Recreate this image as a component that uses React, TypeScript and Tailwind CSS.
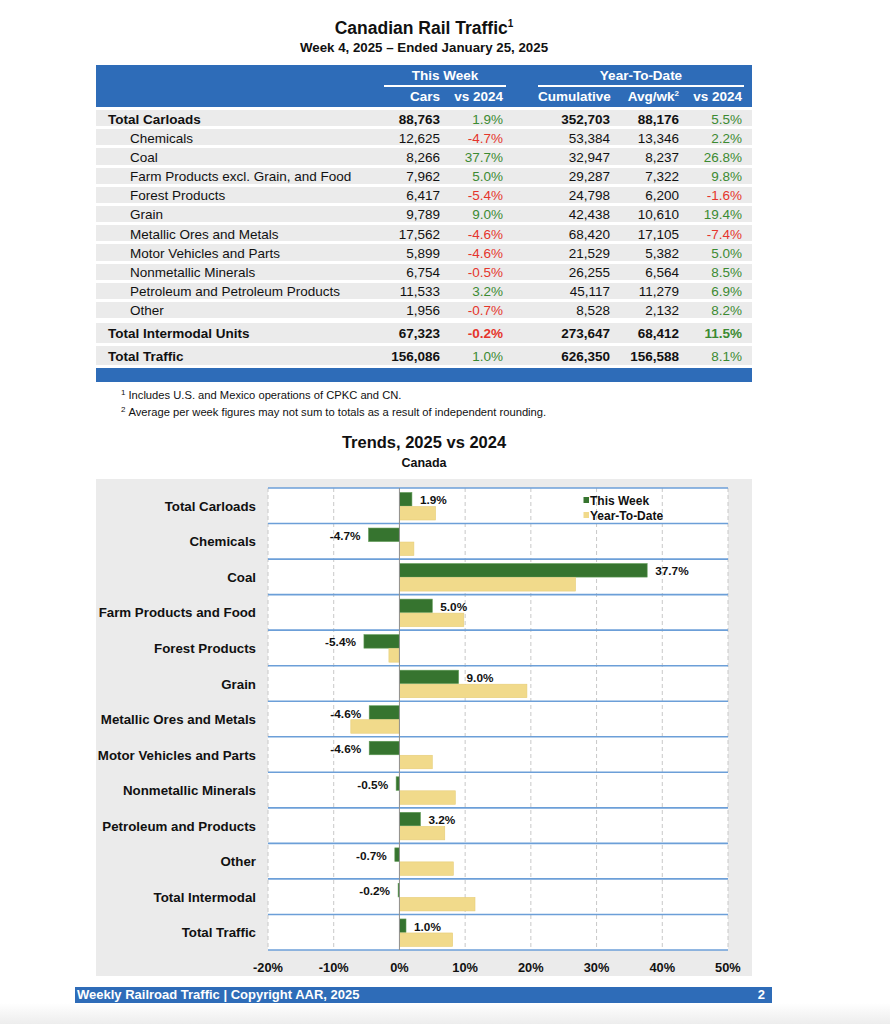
import React from 'react';

type Row = {
  label: string;
  total?: boolean;
  cars: string;
  vs: string;
  cum: string;
  avg: string;
  ytd: string;
  boldPct?: boolean;
};

const carloads: Row[] = [
  { label: 'Total Carloads', total: true, cars: '88,763', vs: '1.9%', cum: '352,703', avg: '88,176', ytd: '5.5%' },
  { label: 'Chemicals', cars: '12,625', vs: '-4.7%', cum: '53,384', avg: '13,346', ytd: '2.2%' },
  { label: 'Coal', cars: '8,266', vs: '37.7%', cum: '32,947', avg: '8,237', ytd: '26.8%' },
  { label: 'Farm Products excl. Grain, and Food', cars: '7,962', vs: '5.0%', cum: '29,287', avg: '7,322', ytd: '9.8%' },
  { label: 'Forest Products', cars: '6,417', vs: '-5.4%', cum: '24,798', avg: '6,200', ytd: '-1.6%' },
  { label: 'Grain', cars: '9,789', vs: '9.0%', cum: '42,438', avg: '10,610', ytd: '19.4%' },
  { label: 'Metallic Ores and Metals', cars: '17,562', vs: '-4.6%', cum: '68,420', avg: '17,105', ytd: '-7.4%' },
  { label: 'Motor Vehicles and Parts', cars: '5,899', vs: '-4.6%', cum: '21,529', avg: '5,382', ytd: '5.0%' },
  { label: 'Nonmetallic Minerals', cars: '6,754', vs: '-0.5%', cum: '26,255', avg: '6,564', ytd: '8.5%' },
  { label: 'Petroleum and Petroleum Products', cars: '11,533', vs: '3.2%', cum: '45,117', avg: '11,279', ytd: '6.9%' },
  { label: 'Other', cars: '1,956', vs: '-0.7%', cum: '8,528', avg: '2,132', ytd: '8.2%' },
];

const totals: Row[] = [
  { label: 'Total Intermodal Units', total: true, boldPct: true, cars: '67,323', vs: '-0.2%', cum: '273,647', avg: '68,412', ytd: '11.5%' },
  { label: 'Total Traffic', total: true, cars: '156,086', vs: '1.0%', cum: '626,350', avg: '156,588', ytd: '8.1%' },
];

const chart = [
  { name: 'Total Carloads', week: 1.9, ytd: 5.5 },
  { name: 'Chemicals', week: -4.7, ytd: 2.2 },
  { name: 'Coal', week: 37.7, ytd: 26.8 },
  { name: 'Farm Products and Food', week: 5.0, ytd: 9.8 },
  { name: 'Forest Products', week: -5.4, ytd: -1.6 },
  { name: 'Grain', week: 9.0, ytd: 19.4 },
  { name: 'Metallic Ores and Metals', week: -4.6, ytd: -7.4 },
  { name: 'Motor Vehicles and Parts', week: -4.6, ytd: 5.0 },
  { name: 'Nonmetallic Minerals', week: -0.5, ytd: 8.5 },
  { name: 'Petroleum and Products', week: 3.2, ytd: 6.9 },
  { name: 'Other', week: -0.7, ytd: 8.2 },
  { name: 'Total Intermodal', week: -0.2, ytd: 11.5 },
  { name: 'Total Traffic', week: 1.0, ytd: 8.1 },
];

const ticks = ['-20%', '-10%', '0%', '10%', '20%', '30%', '40%', '50%'];

function Pct({ v, bold }: { v: string; bold?: boolean }) {
  const neg = v.startsWith('-');
  return (
    <div className={`text-right ${neg ? 'text-[#e5352c]' : 'text-[#3b8a32]'} ${bold ? 'font-bold' : 'font-normal'}`}>
      {v}
    </div>
  );
}

function TableRow({ r, tall }: { r: Row; tall?: boolean }) {
  return (
    <div
      className={`grid grid-cols-[288px_56px_63px_35px_72px_69px_63px_10px] items-start bg-[#ebebeb] mt-[3px] ${
        tall ? 'h-[19.5px] pt-[3px] leading-[16px]' : 'h-[16.2px] pt-[2.5px] leading-[13.7px]'
      }`}
    >
      <div className={r.total ? 'pl-[12px] font-bold' : 'pl-[34px]'}>{r.label}</div>
      <div className={`text-right ${r.total ? 'font-bold' : ''}`}>{r.cars}</div>
      <Pct v={r.vs} bold={r.boldPct} />
      <div />
      <div className={`text-right ${r.total ? 'font-bold' : ''}`}>{r.cum}</div>
      <div className={`text-right ${r.total ? 'font-bold' : ''}`}>{r.avg}</div>
      <Pct v={r.ytd} bold={r.boldPct} />
      <div />
    </div>
  );
}

function TrendChart() {
  const W = 460;
  const H = 462;
  const rh = H / 13;
  const sc = W / 70;
  const x0 = 20 * sc;
  return (
    <svg width={W} height={H} className="block overflow-visible">
      {/* dashed gridlines */}
      {ticks.map((_, k) =>
        k === 2 ? null : (
          <line key={k} x1={(k * W) / 7} x2={(k * W) / 7} y1={0} y2={H} stroke="#c8c8c8" strokeWidth={1} strokeDasharray="4 3" />
        )
      )}
      {chart.map((c, i) => {
        const top = i * rh;
        const wx = c.week >= 0 ? x0 : x0 + c.week * sc;
        const yx = c.ytd >= 0 ? x0 : x0 + c.ytd * sc;
        const labelX = c.week >= 0 ? x0 + c.week * sc + 8 : x0 + c.week * sc - 8;
        return (
          <g key={c.name}>
            <rect x={wx} y={top + 4.5} width={Math.abs(c.week) * sc} height={13.5} fill="#36742f" stroke="#5f9a55" strokeWidth={0.6} />
            <rect x={yx} y={top + 18.5} width={Math.abs(c.ytd) * sc} height={13.5} fill="#f1da8b" stroke="#e6cd78" strokeWidth={0.6} />
            <text
              x={labelX}
              y={top + 12.3}
              textAnchor={c.week >= 0 ? 'start' : 'end'}
              dominantBaseline="central"
              fontSize={11.8}
              fontWeight={700}
              fill="#111"
            >
              {c.week.toFixed(1)}%
            </text>
          </g>
        );
      })}
      {/* category separators */}
      {Array.from({ length: 14 }, (_, i) => (
        <line key={i} x1={0} x2={W} y1={i * rh} y2={i * rh} stroke="#6c9fd8" strokeWidth={1.6} />
      ))}
      {/* zero axis */}
      <line x1={x0} x2={x0} y1={0} y2={H} stroke="#8f8f8f" strokeWidth={1} />
      {/* legend */}
      <rect x={315.5} y={9} width={5.5} height={6} fill="#36742f" />
      <text x={322} y={12.5} dominantBaseline="central" fontSize={12} fontWeight={700} fill="#111">
        This Week
      </text>
      <rect x={315.5} y={24} width={5.5} height={6} fill="#f1da8b" />
      <text x={322} y={28.3} dominantBaseline="central" fontSize={12} fontWeight={700} fill="#111">
        Year-To-Date
      </text>
    </svg>
  );
}

export default function App() {
  return (
    <div className="w-[890px] h-[1024px] bg-white overflow-hidden text-[#111] font-['Liberation_Sans',Arial,sans-serif]">
      <div className="ml-[96px] w-[656px] pt-[17px]">
        {/* Heading */}
        <div className="text-center text-[17.5px] font-bold leading-[22px]">
          Canadian Rail Traffic<span className="relative -top-[7px] text-[10px] leading-none">1</span>
        </div>
        <div className="text-center text-[13.3px] font-bold leading-[17px]">Week 4, 2025 – Ended January 25, 2025</div>

        {/* Table */}
        <div className="mt-[9px] text-[13.5px]">
          <div className="bg-[#2e6cb8] text-white font-bold">
            <div className="flex h-[22px]">
              <div className="w-[288px]" />
              <div className="w-[122px] h-[22px] pt-[1px] leading-[19px] text-center border-b-2 border-white">This Week</div>
              <div className="w-[32px]" />
              <div className="w-[206px] h-[22px] pt-[1px] leading-[19px] text-center border-b-2 border-white">Year-To-Date</div>
            </div>
            <div className="grid grid-cols-[288px_56px_63px_35px_72px_69px_63px_10px] h-[20px] leading-[20px]">
              <div />
              <div className="text-right">Cars</div>
              <div className="text-right">vs 2024</div>
              <div />
              <div className="text-right">Cumulative</div>
              <div className="text-right">
                Avg/wk<span className="relative -top-[5px] text-[8px] leading-none">2</span>
              </div>
              <div className="text-right">vs 2024</div>
              <div />
            </div>
          </div>
          {carloads.map((r) => (
            <TableRow key={r.label} r={r} />
          ))}
          <div className="h-[2px]" />
          {totals.map((r) => (
            <TableRow key={r.label} r={r} tall />
          ))}
          <div className="mt-[3px] h-[14px] bg-[#2e6cb8]" />
        </div>

        {/* Footnotes */}
        <div className="mt-[5px] pl-[25px] text-[11.2px] leading-[17px]">
          <div>
            <span className="relative -top-[4px] text-[8px] leading-none mr-[3px]">1</span>Includes U.S. and Mexico operations of CPKC and CN.
          </div>
          <div>
            <span className="relative -top-[4px] text-[8px] leading-none mr-[3px]">2</span>Average per week figures may not sum to totals as a result of independent rounding.
          </div>
        </div>

        {/* Chart heading */}
        <div className="mt-[11px] text-center text-[16.5px] font-bold leading-[20px]">Trends, 2025 vs 2024</div>
        <div className="mt-[3px] text-center text-[12.5px] font-bold leading-[16px]">Canada</div>

        {/* Chart panel */}
        <div className="mt-[8px] h-[497px] bg-[#ebebeb] pt-[9px] flex">
          <div className="w-[160px] flex flex-col pt-[1px]">
            {chart.map((c) => (
              <div key={c.name} className="h-[35.54px] flex items-center justify-end text-[13.3px] font-bold">
                {c.name}
              </div>
            ))}
          </div>
          <div className="ml-[12px] w-[460px] flex flex-col">
            <div className="bg-white">
              <TrendChart />
            </div>
            <div className="flex justify-between pt-[10px]">
              {ticks.map((t) => (
                <div key={t} className="w-0 flex justify-center">
                  <span className="text-[12.8px] font-bold leading-[16px] whitespace-nowrap">{t}</span>
                </div>
              ))}
            </div>
          </div>
        </div>
      </div>

      {/* Footer */}
      <div className="ml-[75px] mt-[11px] w-[697px] h-[16px] bg-[#2e6cb8] text-white font-bold text-[13px] leading-[16px] flex justify-between pl-[2px] pr-[7px]">
        <span>Weekly Railroad Traffic | Copyright AAR, 2025</span>
        <span>2</span>
      </div>
      <div className="h-[21px] bg-linear-to-b from-white to-[#ededed]" />
    </div>
  );
}
